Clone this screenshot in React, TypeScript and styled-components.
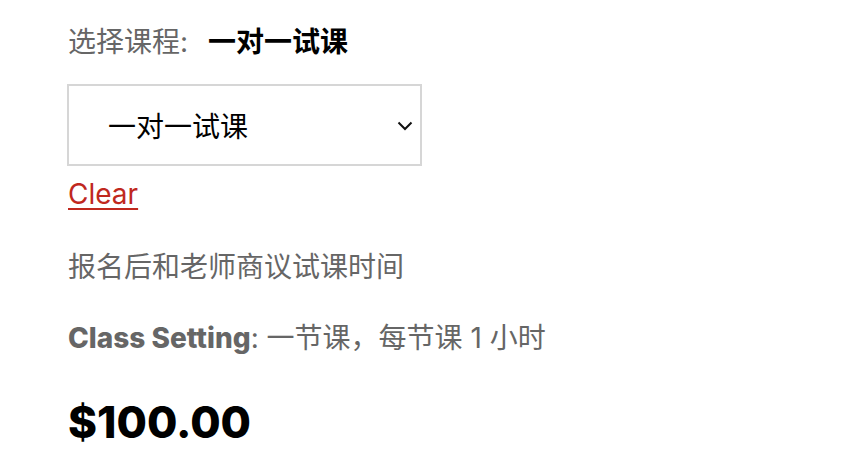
import { createGlobalStyle, styled } from 'styled-components';

const GlobalStyle = createGlobalStyle`
  html, body {
    margin: 0;
    padding: 0;
    background: #fff;
  }
  body {
    font-family: 'Inter', 'Noto Sans CJK SC', sans-serif;
  }
`;

const Page = styled.div`
  padding: 22px 0 0 68px;
  display: flex;
  flex-direction: column;
  align-items: flex-start;
`;

const LabelRow = styled.div`
  display: flex;
  align-items: baseline;
  font-size: 28px;
  line-height: 40px;
  color: #666;
`;

const Selected = styled.span`
  margin-left: 20px;
  color: #000;
  font-weight: 700;
`;

const SelectBox = styled.div`
  margin-top: 22px;
  box-sizing: border-box;
  width: 355px;
  height: 82px;
  border: 2px solid #d6d6d6;
  display: flex;
  align-items: center;
  justify-content: space-between;
  padding: 0 7px 0 39px;
  font-size: 28px;
  color: #000;
  margin-left: -1px;
`;

const Chevron = styled.svg`
  width: 16px;
  height: 10px;
  margin-top: 2px;
`;

const ClearLink = styled.a`
  margin-top: 8px;
  font-size: 28px;
  line-height: 40px;
  color: #c0281e;
  text-decoration: underline;
  text-underline-offset: 4px;
  text-decoration-thickness: 2px;
`;

const Note = styled.p`
  margin: 33px 0 0;
  font-size: 28px;
  line-height: 40px;
  color: #666;
`;

const Setting = styled.p`
  margin: 31px 0 0;
  font-size: 28px;
  line-height: 40px;
  color: #666;

  strong {
    font-weight: 800;
  }
`;

const Price = styled.div`
  margin-top: 36px;
  font-size: 44px;
  line-height: 56px;
  font-weight: 800;
  color: #000;
`;

export default function App() {
  return (
    <>
      <GlobalStyle />
      <Page>
        <LabelRow>
          选择课程:<Selected>一对一试课</Selected>
        </LabelRow>
        <SelectBox>
          <span>一对一试课</span>
          <Chevron viewBox="0 0 16 10" fill="none">
            <path d="M1.5 1.5 L8 8 L14.5 1.5" stroke="#111" strokeWidth="2" />
          </Chevron>
        </SelectBox>
        <ClearLink href="#">Clear</ClearLink>
        <Note>报名后和老师商议试课时间</Note>
        <Setting>
          <strong>Class Setting</strong>: 一节课，每节课 1 小时
        </Setting>
        <Price>$100.00</Price>
      </Page>
    </>
  );
}
